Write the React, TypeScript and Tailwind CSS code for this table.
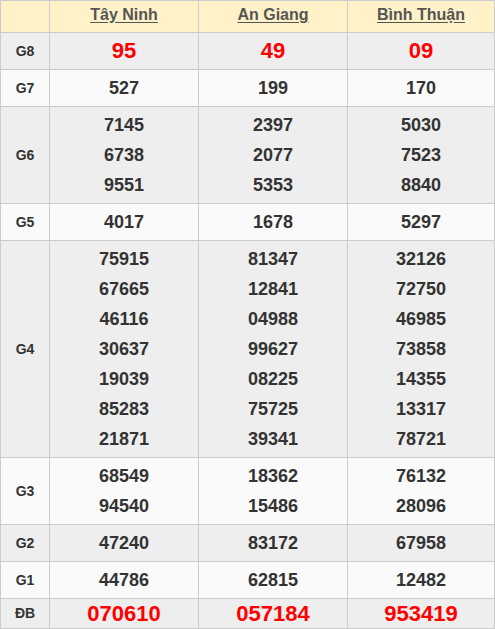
import React from "react";

// Kết quả xổ số - bảng 3 đài
interface Prize {
    label: string;
    values: string[][];
    big?: boolean;
    red?: boolean;
}

const provinces = ["Tây Ninh", "An Giang", "Bình Thuận"];

const prizes: Prize[] = [
    { label: "G8", values: [["95"], ["49"], ["09"]], big: true, red: true },
    { label: "G7", values: [["527"], ["199"], ["170"]] },
    {
        label: "G6",
        values: [
            ["7145", "6738", "9551"],
            ["2397", "2077", "5353"],
            ["5030", "7523", "8840"],
        ],
    },
    { label: "G5", values: [["4017"], ["1678"], ["5297"]] },
    {
        label: "G4",
        values: [
            ["75915", "67665", "46116", "30637", "19039", "85283", "21871"],
            ["81347", "12841", "04988", "99627", "08225", "75725", "39341"],
            ["32126", "72750", "46985", "73858", "14355", "13317", "78721"],
        ],
    },
    {
        label: "G3",
        values: [
            ["68549", "94540"],
            ["18362", "15486"],
            ["76132", "28096"],
        ],
    },
    { label: "G2", values: [["47240"], ["83172"], ["67958"]] },
    { label: "G1", values: [["44786"], ["62815"], ["12482"]] },
    { label: "ĐB", values: [["070610"], ["057184"], ["953419"]], big: true, red: true },
];

export default function App() {
    return (
        <div className="w-[495px] bg-white font-['Liberation_Sans',Arial,sans-serif]">
            <table className="w-full table-fixed border-collapse border border-[#cccccc] text-center">
                <colgroup>
                    <col className="w-[49px]" />
                    <col className="w-[149px]" />
                    <col className="w-[149px]" />
                    <col />
                </colgroup>
                <thead>
                    <tr className="bg-[#fff2c8]">
                        <th className="border border-[#cccccc] h-[31px]"></th>
                        {provinces.map((p) => (
                            <th
                                key={p}
                                className="border border-[#cccccc] pt-[5px] pb-[8px] align-top text-[16px] leading-[18px] font-bold text-[#555555]"
                            >
                                <a className="underline underline-offset-[2px] cursor-pointer">{p}</a>
                            </th>
                        ))}
                    </tr>
                </thead>
                <tbody>
                    {prizes.map((prize, i) => {
                        const isLast = prize.label === "ĐB";
                        const rowBg = i % 2 === 0 ? "bg-[#eeeeee]" : "bg-[#fafafa]";
                        return (
                            <tr key={prize.label} className={rowBg}>
                                <td
                                    className={
                                        "border border-[#cccccc] text-[14px] font-bold text-[#333333] " +
                                        (isLast ? "py-0 leading-[29px]" : "py-[3px] leading-[30px]")
                                    }
                                >
                                    {prize.label}
                                </td>
                                {prize.values.map((list, j) => (
                                    <td
                                        key={j}
                                        className={
                                            "border border-[#cccccc] font-bold " +
                                            (prize.red ? "text-[#ff0000] " : "text-[#333333] ") +
                                            (prize.big ? "text-[22px] " : "text-[18px] ") +
                                            (isLast ? "py-0 leading-[29px]" : "py-[3px] leading-[30px]")
                                        }
                                    >
                                        {list.map((v) => (
                                            <div key={v}>{v}</div>
                                        ))}
                                    </td>
                                ))}
                            </tr>
                        );
                    })}
                </tbody>
            </table>
        </div>
    );
}
